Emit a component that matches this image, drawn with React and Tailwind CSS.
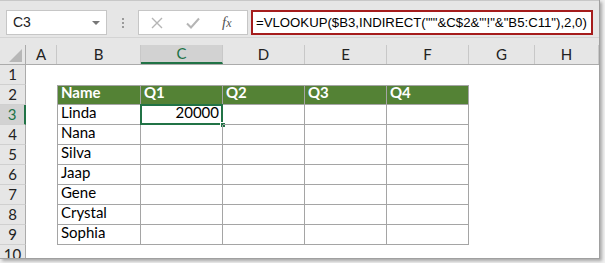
import React from "react";

// Excel 2016 look: formula bar + sheet with a small green-header table (B2:F9).

const COLS = [
  { key: "A", w: "w-[31px]" },
  { key: "B", w: "w-[84px]" },
  { key: "C", w: "w-[82px]" },
  { key: "D", w: "w-[82px]" },
  { key: "E", w: "w-[82px]" },
  { key: "F", w: "w-[82px]" },
  { key: "G", w: "w-[66px]" },
  { key: "H", w: "flex-1" },
];

const NAMES = ["Linda", "Nana", "Silva", "Jaap", "Gene", "Crystal", "Sophia"];
const HEAD = ["Name", "Q1", "Q2", "Q3", "Q4"];
const TABLE_COLS = ["B", "C", "D", "E", "F"];

const FORMULA = `=VLOOKUP($B3,INDIRECT("'"&C$2&"'!"&"B5:C11"),2,0)`;

function FormulaBar() {
  return (
    <div className="h-[37px] shrink-0 bg-[#e6e6e6] border-t border-[#c8c8c8] flex items-start pt-[9px] pl-[6px]">
      <div className="w-[101px] h-[25px] bg-white border border-[#c6c6c6] flex items-center justify-between pl-[6px] pr-[6px]">
        <span className="text-[14px] text-[#222] font-['Liberation_Sans',sans-serif]">C3</span>
        <span className="w-0 h-0 border-l-[4px] border-r-[4px] border-t-[4px] border-l-transparent border-r-transparent border-t-[#777]" />
      </div>
      <div className="w-[31px] h-[25px] flex flex-col items-center justify-center gap-[2px]">
        <span className="w-[2px] h-[2px] bg-[#9a9a9a]" />
        <span className="w-[2px] h-[2px] bg-[#9a9a9a]" />
        <span className="w-[2px] h-[2px] bg-[#9a9a9a]" />
      </div>
      <div className="w-[110px] h-[25px] bg-white border border-[#c6c6c6] flex items-center">
        <svg width="12" height="12" viewBox="0 0 12 12" className="ml-[12px]">
          <path d="M1 1 L11 11 M11 1 L1 11" stroke="#b5b5b5" strokeWidth="1.4" fill="none" />
        </svg>
        <svg width="14" height="12" viewBox="0 0 14 12" className="ml-[23px]">
          <path d="M1 6.5 L5 10.5 L13 1.5" stroke="#b5b5b5" strokeWidth="2" fill="none" />
        </svg>
        <span className="ml-[22px] text-[15px] italic text-[#555] font-['Liberation_Serif',serif]">
          f<span className="text-[12px]">x</span>
        </span>
      </div>
      <div className="ml-[3px] w-[342px] h-[25px] bg-white border-2 border-[#a51c1c] flex items-center pl-[3px] overflow-hidden">
        <span className="text-[13.2px] text-black whitespace-nowrap font-['Liberation_Sans',sans-serif]">
          {FORMULA}
        </span>
      </div>
    </div>
  );
}

function ColumnHeaders() {
  return (
    <div className="flex h-[20px] shrink-0 bg-[#e6e6e6] border-b border-[#ababab]">
      <div className="w-[26px] border-r border-[#ababab] relative">
        <svg width="26" height="20" viewBox="0 0 26 20" className="absolute inset-0">
          <path d="M22 4 L22 17 L9 17 Z" fill="#b7b7b7" />
        </svg>
      </div>
      {COLS.map((c) => (
        <div
          key={c.key}
          className={`${c.w} flex items-center justify-center border-r border-[#c8c8c8] text-[15px] ${
            c.key === "C"
              ? "bg-[#d2d2d2] text-[#217346] border-b-2 border-b-[#217346]"
              : "text-[#222]"
          }`}
        >
          {c.key}
        </div>
      ))}
    </div>
  );
}

function Cell({ col, row, w }) {
  const inTable = TABLE_COLS.includes(col) && row >= 2 && row <= 9;
  let text = null;
  let header = false;
  if (inTable && row === 2) {
    text = HEAD[TABLE_COLS.indexOf(col)];
    header = true;
  } else if (inTable && col === "B") {
    text = NAMES[row - 3];
  }
  const selected = col === "C" && row === 3;
  return (
    <div
      className={`${w} relative flex items-end pb-[1px] px-[3px] text-[15px] ${
        inTable ? "border-r border-b border-[#a5a5a5]" : ""
      } ${inTable && col === "B" ? "border-l" : ""} ${inTable && row === 2 ? "border-t" : ""} ${
        header ? "bg-[#548235] text-white font-bold" : "text-black"
      } ${selected ? "justify-end" : ""}`}
    >
      {selected ? "20000" : text}
      {selected && (
        <>
          <span className="absolute -left-[1px] -top-[1px] -right-[1px] -bottom-[1px] border-2 border-[#217346]" />
          <span className="absolute -right-[4px] -bottom-[4px] w-[6px] h-[6px] bg-[#217346] border border-white" />
        </>
      )}
    </div>
  );
}

function Row({ n }) {
  const sel = n === 3;
  return (
    <div className="flex h-[20px] shrink-0">
      <div
        className={`w-[26px] flex items-center justify-center text-[15px] border-b border-[#d0d0d0] ${
          sel
            ? "bg-[#d2d2d2] text-[#217346] border-r-2 border-r-[#217346]"
            : "bg-[#e6e6e6] text-[#222] border-r border-r-[#ababab]"
        }`}
      >
        {n}
      </div>
      {COLS.map((c) => (
        <Cell key={c.key} col={c.key} row={n} w={c.w} />
      ))}
    </div>
  );
}

export default function App() {
  return (
    <div className="w-[605px] h-[263px] bg-[#f0f0f0] font-['Lato','Liberation_Sans',sans-serif]">
      <div className="w-[600px] h-[259px] bg-white border-r border-b border-[#a0a0a0] shadow-[2px_2px_3px_rgba(0,0,0,0.3)] flex flex-col overflow-hidden">
        <FormulaBar />
        <div className="h-[8px] shrink-0 bg-[#e6e6e6] border-t border-[#d4d4d4]" />
        <ColumnHeaders />
        {[1, 2, 3, 4, 5, 6, 7, 8, 9, 10].map((n) => (
          <Row key={n} n={n} />
        ))}
      </div>
    </div>
  );
}
